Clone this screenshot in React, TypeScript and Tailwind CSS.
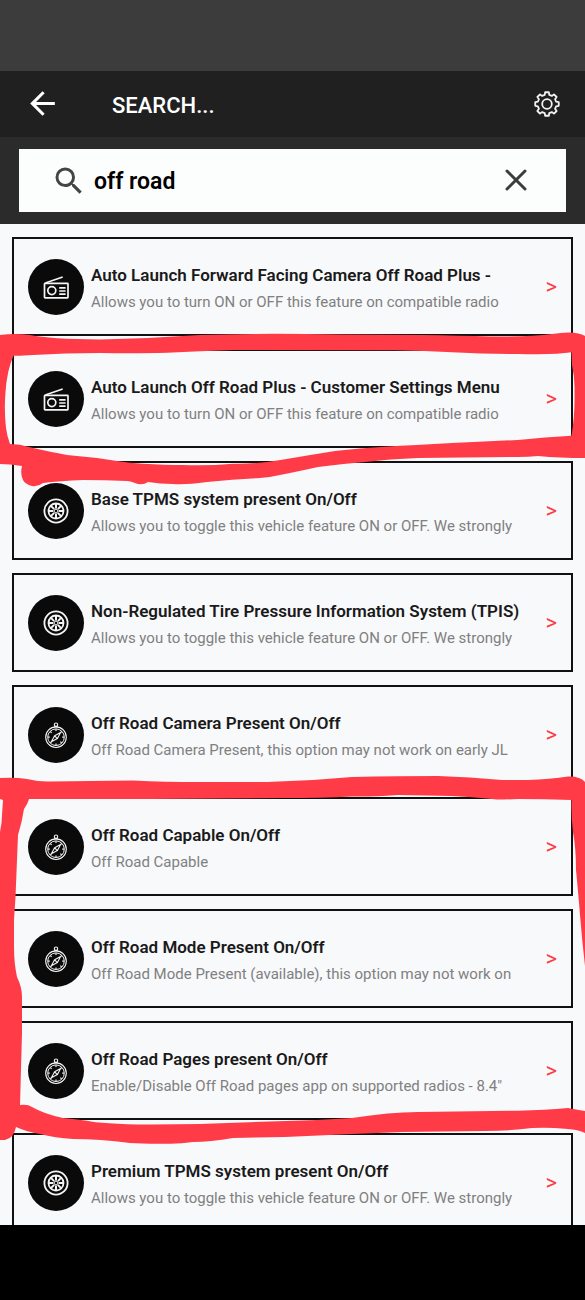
import { X } from 'lucide-react'
import { MdArrowBack, MdSearch } from 'react-icons/md'

type IconName = 'radio' | 'wheel' | 'compass'

const results: { icon: IconName; title: string; description: string }[] = [
  {
    icon: 'radio',
    title: 'Auto Launch Forward Facing Camera Off Road Plus -',
    description: 'Allows you to turn ON or OFF this feature on compatible radio',
  },
  {
    icon: 'radio',
    title: 'Auto Launch Off Road Plus - Customer Settings Menu',
    description: 'Allows you to turn ON or OFF this feature on compatible radio',
  },
  {
    icon: 'wheel',
    title: 'Base TPMS system present On/Off',
    description: 'Allows you to toggle this vehicle feature ON or OFF. We strongly',
  },
  {
    icon: 'wheel',
    title: 'Non-Regulated Tire Pressure Information System (TPIS)',
    description: 'Allows you to toggle this vehicle feature ON or OFF. We strongly',
  },
  {
    icon: 'compass',
    title: 'Off Road Camera Present On/Off',
    description: 'Off Road Camera Present, this option may not work on early JL',
  },
  {
    icon: 'compass',
    title: 'Off Road Capable On/Off',
    description: 'Off Road Capable',
  },
  {
    icon: 'compass',
    title: 'Off Road Mode Present On/Off',
    description: 'Off Road Mode Present (available), this option may not work on',
  },
  {
    icon: 'compass',
    title: 'Off Road Pages present On/Off',
    description: 'Enable/Disable Off Road pages app on supported radios - 8.4"',
  },
  {
    icon: 'wheel',
    title: 'Premium TPMS system present On/Off',
    description: 'Allows you to toggle this vehicle feature ON or OFF. We strongly',
  },
]

const eighths = [0, 45, 90, 135, 180, 225, 270, 315]

function GearIcon() {
  const points = eighths
    .flatMap((deg) =>
      [
        [-14, 9.4],
        [-9, 11.9],
        [9, 11.9],
        [14, 9.4],
      ].map(([offset, r]) => {
        const a = ((deg + offset) * Math.PI) / 180
        return `${(14 + r * Math.sin(a)).toFixed(2)},${(14 - r * Math.cos(a)).toFixed(2)}`
      }),
    )
    .join(' ')

  return (
    <svg viewBox="0 0 28 28" className="size-7" fill="none" stroke="#f4f4f4" strokeWidth="1.8" strokeLinejoin="round">
      <polygon points={points} />
      <circle cx="14" cy="14" r="4.8" />
    </svg>
  )
}

function RadioIcon() {
  return (
    <svg viewBox="0 0 28 28" className="size-7" fill="none" stroke="#f5f5f5" strokeWidth="1.7">
      <rect x="2.5" y="10.3" width="23.5" height="14.6" rx="0.6" />
      <path d="M4 9.8 20 4.2" strokeLinecap="round" />
      <circle cx="9.8" cy="17.6" r="4" />
      <path d="M17.2 14.8h6.4M17.2 18h6.4M17.2 21.2h6.4" />
    </svg>
  )
}

function WheelIcon() {
  return (
    <svg viewBox="0 0 28 28" className="size-7" fill="none" stroke="#f5f5f5">
      <circle cx="14" cy="14" r="11.6" strokeWidth="1.8" />
      <circle cx="14" cy="14" r="7.5" strokeWidth="1.8" />
      <circle cx="14" cy="14" r="1.9" strokeWidth="1" />
      {eighths.map((deg) => (
        <path key={deg} d="M14 11.4V6.8" strokeWidth="2" transform={`rotate(${deg} 14 14)`} />
      ))}
    </svg>
  )
}

function CompassIcon() {
  return (
    <svg viewBox="0 0 28 28" className="size-7" fill="none" stroke="#f5f5f5">
      <circle cx="14" cy="3.7" r="1.7" strokeWidth="1.1" />
      <path d="M12.4 5.8h3.2" strokeWidth="1.2" />
      <circle cx="14" cy="16.2" r="10.3" strokeWidth="1.1" />
      <circle cx="14" cy="16.2" r="8.3" strokeWidth="1" />
      {eighths.map((deg) => (
        <path key={deg} d="M14 8.2v1.8" strokeWidth="1.2" transform={`rotate(${deg} 14 16.2)`} />
      ))}
      <path d="m18.6 11.6-6 3.2-3.2 6 6-3.2zM12.6 14.8l2.8 2.8" strokeWidth="1.1" strokeLinejoin="round" />
    </svg>
  )
}

const icons = { radio: RadioIcon, wheel: WheelIcon, compass: CompassIcon }

// Hand-drawn marker loops that lie over the list
function MarkerLoops() {
  return (
    <svg
      viewBox="0 224 585 1001"
      preserveAspectRatio="none"
      className="pointer-events-none absolute top-0 left-0 h-[1001px] w-full"
      fill="#ff3b47"
      aria-hidden="true"
    >
      <path
        fillRule="evenodd"
        d="M0 335Q15 333 30 335Q50 339 100 339.5Q150 338.5 200 335Q260 333 340 334.5Q430 334.5 490 336.5Q530 337 552 334Q576 330 585 336L585 458Q560 458 538 456Q528 457 518 457L418 458Q390 459 365 462Q340 464 318 467Q300 471 285 474Q272 477 260 478Q235 479 207 482Q185 485 173 484Q160 484 148 482Q142 486 135 483Q130 481 127 481Q105 480 83 480Q60 481 43 483Q38 487 32 486Q25 484 23 480Q20 474 22 466Q10 464 0 464Z
        M13.5 355.7Q20 356 33 355Q65 353 100 353Q140 353.5 167 352.7Q200 351 233 350L395 350.3Q425 351 452 352.3Q485 354 518 354Q555 355 571.5 352.3L572 365Q575 378 574.5 392Q575 415 571.5 435.7Q545 437 518 440L452 443Q415 445 385 446.7Q360 448 335 451Q310 455 285 459.3Q260 464 233 463.7Q208 466 183 465Q165 465 143 463.7Q130 463 117 461Q92 457 67 455Q50 452 30 447.3Q20 444 10 444Q7 436 6 428Q4 410 5.5 392Q7 370 13.5 355.7Z"
      />
      <path d="M0 778Q15 777 27 779Q40 782 50 781.5L133 780.5Q165 782 200 782L267 782Q310 781 352 777Q400 776 438 776Q470 777 502 780L528 780Q550 779 568 776.5Q580 776 585 782V966Q582 940 580 915Q578 890 576 870Q576 848 573 832Q571 815 571.5 800Q545 799 518 799Q500 800 492 799Q472 797 452 796L398 795Q370 797 352 796.5Q320 798 285 798L150 799L29 799Q28 803 24 809Q22 822 18 835L15.5 897L14 920V947Q14 963 17 977Q22 987 22 997V1033L20 1105Q28 1104 32 1107Q44 1114 63 1118Q75 1119 87 1120.7Q100 1124 150 1124.5Q180 1124 200 1124L270 1121.5Q310 1121 352 1118Q390 1112 418 1112L518 1110.7Q545 1110 568 1108Q578 1110 585 1111V1133Q577 1129 565 1128.7Q548 1127 532 1128Q510 1131 485 1131L402 1132L352 1134L285 1137L233 1138Q210 1142 193 1142Q180 1144 167 1143.7Q145 1144 130 1143Q100 1139 73 1139Q55 1138 40 1134Q27 1132 16 1127Q14 1138 5 1140H0V832Q2 823 2 815L3 800L0 799Z" />
    </svg>
  )
}

export default function App() {
  return (
    <div className="flex h-screen flex-col bg-[#f8f9fb] font-[Roboto,sans-serif]">
      <div className="h-[71px] shrink-0 bg-[#3c3c3c]" />

      <header className="flex h-[66px] shrink-0 items-center bg-[#202020] px-6 text-white">
        <button type="button" aria-label="Back" className="pb-0.5">
          <MdArrowBack size={37} />
        </button>
        <h1 className="ml-[51px] pt-0.5 text-[22px] font-medium">SEARCH...</h1>
        <button type="button" aria-label="Settings" className="ml-auto">
          <GearIcon />
        </button>
      </header>

      <div className="shrink-0 bg-[#2b2b2b] px-[19px] py-3">
        <label className="flex h-[63px] items-center bg-[#fcfefd] px-8">
          <MdSearch size={36} className="shrink-0 text-[#444]" />
          <input
            type="text"
            aria-label="Search"
            defaultValue="off road"
            className="ml-[7px] min-w-0 flex-1 pt-1 text-[23px] font-semibold text-black outline-none"
          />
          <button type="button" aria-label="Clear" className="pb-0.5">
            <X size={36} className="text-[#3c3c3c]" />
          </button>
        </label>
      </div>

      <main className="relative min-h-0 flex-1 overflow-hidden">
        <ul className="flex flex-col gap-[13px] px-3 pt-[13px]">
          {results.map(({ icon, title, description }) => {
            const Icon = icons[icon]
            return (
              <li key={title}>
                <a href="#" className="flex h-[99px] items-center border-2 border-[#111] px-3.5">
                  <span className="flex size-14 shrink-0 items-center justify-center rounded-full bg-[#0a0a0a]">
                    <Icon />
                  </span>
                  <span className="ml-[7px] min-w-0 flex-1 overflow-hidden pt-1 whitespace-nowrap">
                    <span className="block text-[17px] leading-[27px] font-semibold text-[#1a1a1a]">{title}</span>
                    <span className="block text-[15px] leading-[27px] text-[#808080]">{description}</span>
                  </span>
                  <span className="text-[22px] text-[#ff3b47]">&gt;</span>
                </a>
              </li>
            )
          })}
        </ul>
        <MarkerLoops />
      </main>

      <div className="h-[75px] shrink-0 bg-black" />
    </div>
  )
}
